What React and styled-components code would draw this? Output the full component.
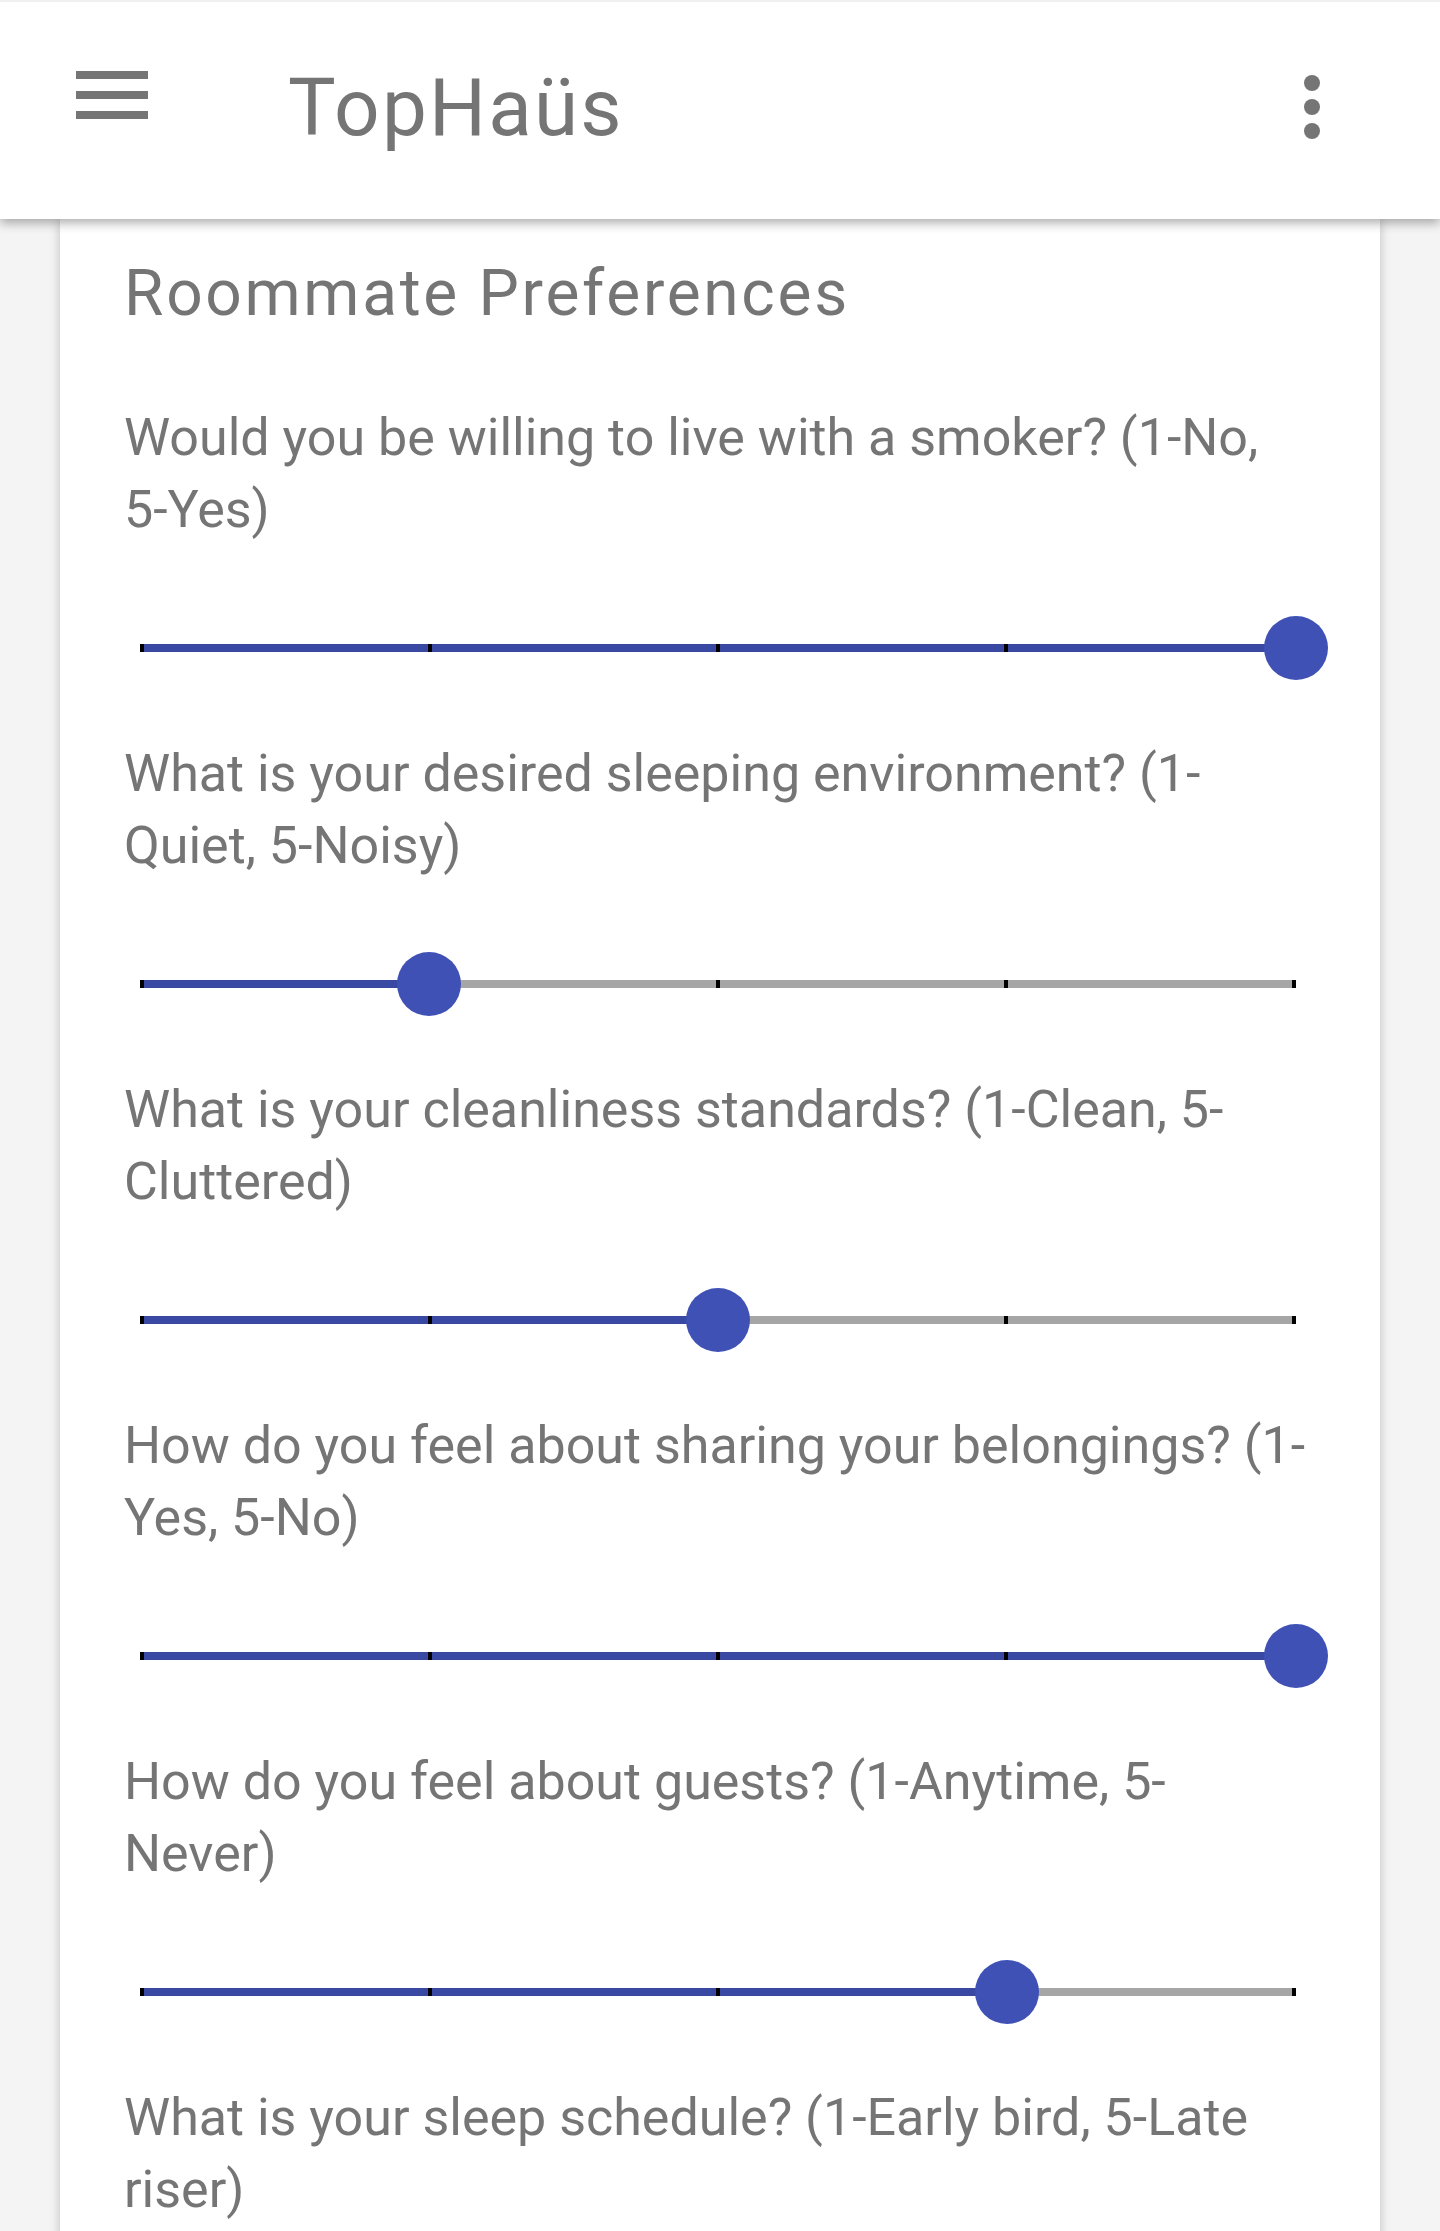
import React from "react";
import styled, { createGlobalStyle } from "styled-components";

const GlobalStyle = createGlobalStyle`
	html, body {
		margin: 0;
		padding: 0;
		background: #f4f4f4;
		font-family: Roboto, "Noto Sans", sans-serif;
	}
`;

const Page = styled.div`
	height: 100vh;
	overflow: hidden;
	background: #f4f4f4;
`;

const AppBar = styled.header`
	position: relative;
	z-index: 2;
	box-sizing: border-box;
	height: 219px;
	display: flex;
	align-items: flex-start;
	padding: 0 80px 0 64px;
	background: #fff;
	border-top: 2px solid #f0f0f0;
	box-shadow: 0 4px 10px rgba(0, 0, 0, 0.32);
`;

const IconButton = styled.div`
	width: 96px;
	height: 96px;
	margin-top: ${(p) => p.top}px;
	color: #757575;
	flex: none;

	svg {
		display: block;
		width: 96px;
		height: 96px;
	}
`;

const Title = styled.h1`
	margin: 58px 0 0 128px;
	font-size: 80px;
	line-height: 96px;
	font-weight: 400;
	letter-spacing: 2.2px;
	color: #757575;
	flex: 1;
`;

const Card = styled.main`
	position: relative;
	z-index: 1;
	margin: 0 60px;
	padding: 35px 70px 0 64px;
	background: #fff;
	min-height: 2100px;
	box-shadow: 0 0 10px rgba(0, 0, 0, 0.22);
`;

const Heading = styled.h2`
	margin: 0 0 67px;
	font-size: 64px;
	line-height: 80px;
	font-weight: 400;
	letter-spacing: 2.7px;
	color: #757575;
`;

const Question = styled.section`
	padding-bottom: 25px;
`;

const Label = styled.p`
	margin: 0;
	padding-top: 1px;
	font-size: 52px;
	line-height: 72px;
	color: #757575;
`;

const SliderRow = styled.div`
	position: relative;
	height: 128px;
	margin: 38px 14px 0 16px;
	display: flex;
	align-items: center;
`;

const Track = styled.div`
	flex: 1;
	display: flex;
	height: 8px;
`;

const Tick = styled.span`
	flex: none;
	width: 4px;
	height: 8px;
	background: #000;
`;

const Segment = styled.span`
	flex: 1;
	height: 8px;
	background: ${(p) => (p.active ? "#3949a3" : "#a6a6a6")};
`;

const Thumb = styled.span`
	position: absolute;
	top: 50%;
	left: ${(p) => p.pos}%;
	width: 64px;
	height: 64px;
	margin: -32px 0 0 -32px;
	border-radius: 50%;
	background: #3f51b5;
`;

const MenuIcon = () => (
	<svg viewBox="0 0 24 24" fill="currentColor">
		<path d="M3 18h18v-2H3v2zm0-5h18v-2H3v2zm0-7v2h18V6H3z" />
	</svg>
);

const MoreIcon = () => (
	<svg viewBox="0 0 24 24" fill="currentColor">
		<circle cx="12" cy="6" r="2" />
		<circle cx="12" cy="12" r="2" />
		<circle cx="12" cy="18" r="2" />
	</svg>
);

const Slider = ({ value }) => {
	const parts = [];
	for (let i = 1; i <= 4; i++) {
		parts.push(<Tick key={"t" + i} />);
		parts.push(<Segment key={"s" + i} active={i < value} />);
	}
	parts.push(<Tick key="t5" />);
	return (
		<SliderRow>
			<Track>{parts}</Track>
			<Thumb pos={((value - 1) / 4) * 100} />
		</SliderRow>
	);
};

const questions = [
	{ text: "Would you be willing to live with a smoker? (1-No, 5-Yes)", value: 5 },
	{ text: "What is your desired sleeping environment? (1-Quiet, 5-Noisy)", value: 2 },
	{ text: "What is your cleanliness standards? (1-Clean, 5-Cluttered)", value: 3 },
	{ text: "How do you feel about sharing your belongings? (1-Yes, 5-No)", value: 5 },
	{ text: "How do you feel about guests? (1-Anytime, 5-Never)", value: 4 },
	{ text: "What is your sleep schedule? (1-Early bird, 5-Late riser)", value: 3 },
];

const App = () => (
	<Page>
		<GlobalStyle />
		<AppBar>
			<IconButton top={45}>
				<MenuIcon />
			</IconButton>
			<Title>TopHaüs</Title>
			<IconButton top={57}>
				<MoreIcon />
			</IconButton>
		</AppBar>

		<Card>
			<Heading>Roommate Preferences</Heading>
			{questions.map((q) => (
				<Question key={q.text}>
					<Label>{q.text}</Label>
					<Slider value={q.value} />
				</Question>
			))}
		</Card>
	</Page>
);

export default App;
